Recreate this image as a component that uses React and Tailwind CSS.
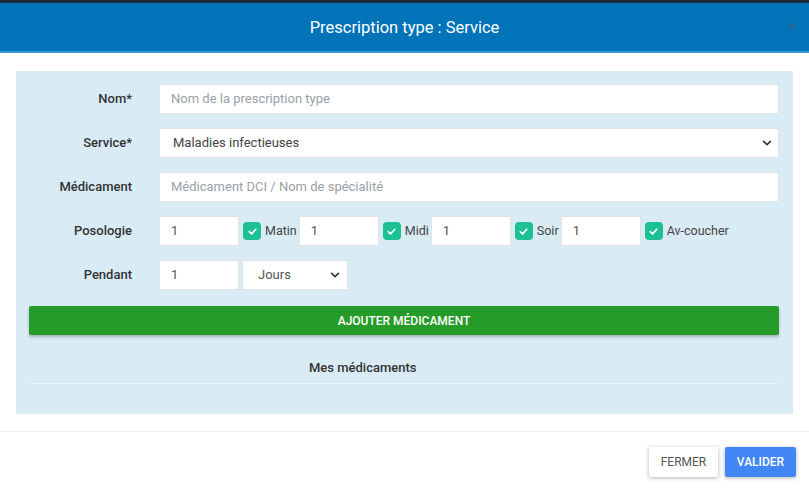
import { FaChevronDown } from 'react-icons/fa';

const Label = ({ children }) => (
  <div className="w-[103px] shrink-0 text-right text-[13px] font-medium text-[#333]">{children}</div>
);

const Check = ({ label }) => (
  <div className="flex items-center">
    <span className="ml-[4px] flex h-[18px] w-[18px] items-center justify-center rounded-[4px] bg-[#1dbf95]">
      <svg width="11" height="11" viewBox="0 0 12 12" fill="none">
        <path d="M2.5 6.2 L5 8.6 L9.6 3.6" stroke="white" strokeWidth="1.8" strokeLinecap="round" strokeLinejoin="round" />
      </svg>
    </span>
    <span className="ml-[4px] mr-[2px] text-[12.5px] text-[#444]">{label}</span>
  </div>
);

const SmallInput = () => (
  <div className="flex h-[30px] w-[80px] items-center border border-[#dfe4e8] bg-white pl-[11px] text-[13px] text-[#555]">1</div>
);

export default function App() {
  return (
    <div className="relative h-[493px] w-[809px] overflow-hidden bg-white font-['Roboto',sans-serif]">
      <div className="h-[3px] bg-[#1d2a36]" />
      <div className="relative flex h-[50px] items-center justify-center border-b-[2px] border-[#3b9bdb] bg-[#0173b8] pt-[3px]">
        <span className="text-[16.5px] text-white">Prescription type : Service</span>
        <span className="absolute right-[13px] top-[16px] text-[16px] leading-none text-[#2f6591]">×</span>
      </div>

      <div className="px-[16px] pt-[18px]">
        <div className="bg-[#d9ecf6] pb-[30px] pl-[13px] pr-[14px] pt-[13px]">
          <div className="flex flex-col gap-[14px]">
            <div className="flex items-center gap-[27px]">
              <Label>Nom*</Label>
              <div className="flex h-[30px] flex-1 items-center border border-[#dfe4e8] bg-white pl-[11px] text-[13px] text-[#9aa1a8]">
                Nom de la prescription type
              </div>
            </div>
            <div className="flex items-center gap-[27px]">
              <Label>Service*</Label>
              <div className="flex h-[30px] flex-1 items-center justify-between border border-[#dfe4e8] bg-white pl-[13px] pr-[6px] text-[13px] text-[#444]">
                Maladies infectieuses
                <FaChevronDown className="text-[10px] text-[#333]" />
              </div>
            </div>
            <div className="flex items-center gap-[27px]">
              <Label>Médicament</Label>
              <div className="flex h-[30px] flex-1 items-center border border-[#dfe4e8] bg-white pl-[11px] text-[13px] text-[#9aa1a8]">
                Médicament DCI / Nom de spécialité
              </div>
            </div>
            <div className="flex items-center gap-[27px]">
              <Label>Posologie</Label>
              <div className="flex items-center">
                <SmallInput />
                <Check label="Matin" />
                <SmallInput />
                <Check label="Midi" />
                <SmallInput />
                <Check label="Soir" />
                <SmallInput />
                <Check label="Av-coucher" />
              </div>
            </div>
            <div className="flex items-center gap-[27px]">
              <Label>Pendant</Label>
              <div className="flex items-center gap-[3px]">
                <SmallInput />
                <div className="flex h-[30px] w-[106px] items-center justify-between border border-[#dfe4e8] bg-white pl-[15px] pr-[7px] text-[13px] text-[#555]">
                  Jours
                  <FaChevronDown className="text-[10px] text-[#333]" />
                </div>
              </div>
            </div>
          </div>

          <button className="mt-[16px] flex h-[29px] w-full items-center justify-center rounded-[2px] bg-[#279b29] text-[12px] font-medium text-white shadow-[0_2px_3px_rgba(0,0,0,0.25)]">
            AJOUTER MÉDICAMENT
          </button>

          <div className="mt-[23px] border-b border-[#eef5f9] pb-[5px] pl-[280px] text-[13px] font-medium text-[#333]">
            Mes médicaments
          </div>
        </div>
      </div>

      <div className="mt-[17px] border-t border-[#eeeeee]" />
      <div className="flex justify-end gap-[7px] pr-[13px] pt-[15px]">
        <button className="h-[30px] w-[69px] rounded-[2px] bg-white text-[12px] text-[#555] shadow-[0_1px_4px_rgba(0,0,0,0.3)]">
          FERMER
        </button>
        <button className="h-[30px] w-[71px] rounded-[2px] bg-[#4285f4] text-[12px] font-medium text-white shadow-[0_1px_4px_rgba(0,0,0,0.3)]">
          VALIDER
        </button>
      </div>
    </div>
  );
}
